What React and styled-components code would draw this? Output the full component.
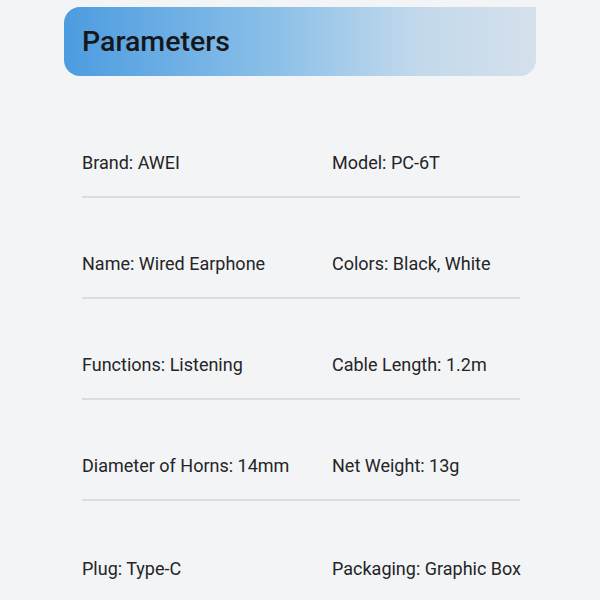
import styled, { createGlobalStyle } from "styled-components";

const GlobalStyle = createGlobalStyle`
	html, body {
		margin: 0;
		padding: 0;
		background: #f3f4f6;
	}
	body {
		font-family: Roboto, "Liberation Sans", sans-serif;
		color: #2a2b2d;
	}
`;

const Page = styled.div`
	width: 600px;
	height: 600px;
	overflow: hidden;
	background: #f3f4f6;
	padding-top: 7px;
	box-sizing: border-box;
`;

const Banner = styled.div`
	margin-left: 64px;
	width: 472px;
	height: 69px;
	border-radius: 16px 0 16px 16px;
	background: linear-gradient(90deg, #4c9ce0 0%, #8cc0e8 45%, #c2d9ec 75%, #d5e0eb 100%);
	display: flex;
	align-items: center;
	padding-left: 18px;
	box-sizing: border-box;
`;

const Title = styled.h1`
	margin: 0;
	font-size: 28.5px;
	font-weight: 500;
	color: #15171a;
`;

const Table = styled.div`
	margin: 21px 0 0 82px;
	width: 438px;
`;

const Row = styled.div`
	height: 101px;
	box-sizing: border-box;
	display: grid;
	grid-template-columns: 250px 1fr;
	align-items: end;
	padding-bottom: 23px;
	border-bottom: ${(p) => (p.$last ? "none" : "2px solid #dcdde1")};
`;

const Cell = styled.div`
	font-size: 18px;
	line-height: 20px;
	font-weight: 400;
	color: #242527;
	white-space: nowrap;
`;

const params = [
	["Brand: AWEI", "Model: PC-6T"],
	["Name: Wired Earphone", "Colors: Black, White"],
	["Functions: Listening", "Cable Length: 1.2m"],
	["Diameter of Horns: 14mm", "Net Weight: 13g"],
	["Plug: Type-C", "Packaging: Graphic Box"],
];

function App() {
	return (
		<Page>
			<GlobalStyle />
			<Banner>
				<Title>Parameters</Title>
			</Banner>
			<Table>
				{params.map((row, i) => (
					<Row key={i} $last={i === params.length - 1}>
						<Cell>{row[0]}</Cell>
						<Cell>{row[1]}</Cell>
					</Row>
				))}
			</Table>
		</Page>
	);
}

export default App;
